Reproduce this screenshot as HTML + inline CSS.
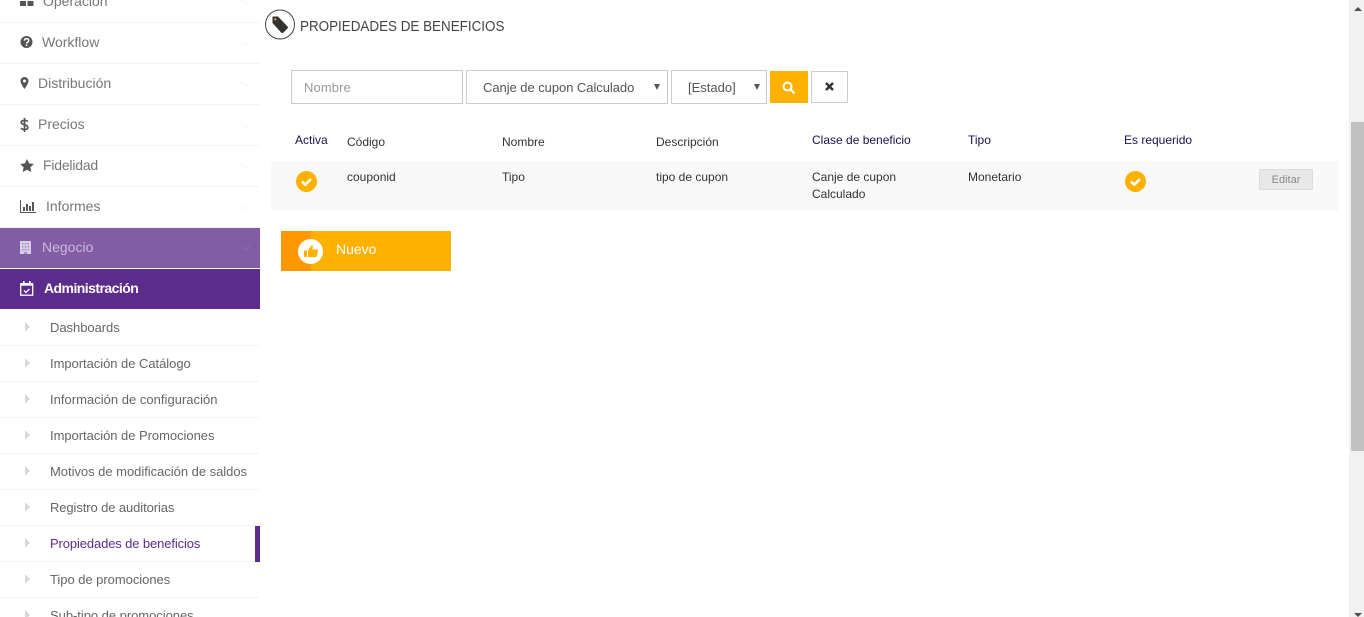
<!DOCTYPE html>
<html lang="es"><head><meta charset="utf-8"><title>Propiedades de beneficios</title>
<style>
html,body{margin:0;padding:0;background:#fff;width:1364px;height:617px;overflow:hidden}
body{font-family:"Liberation Sans",Arial,sans-serif;position:relative}
.a{position:absolute;white-space:nowrap}
.m{position:absolute;left:0;width:260px;height:40px;border-bottom:1px solid #f3f3f3;box-sizing:content-box}
.m span{position:absolute;top:10px;font-size:14px;line-height:18px;color:#777;letter-spacing:0}
.m svg.c{position:absolute;left:238px;top:17px}
.m svg.i{position:absolute}
.s{position:absolute;left:0;width:260px;height:35px;border-bottom:1px solid #f3f3f3}
.s span{position:absolute;left:50px;top:9px;font-size:13px;line-height:17px;color:#666;letter-spacing:-.04px;white-space:nowrap}
.s i{position:absolute;left:25px;top:12px;width:0;height:0;border-left:5px solid #d8d8d8;border-top:5px solid transparent;border-bottom:5px solid transparent}
.t{position:absolute;font-size:12px;line-height:17px;color:#333;white-space:nowrap}
.h{color:#1d0f4c}
</style></head><body>

<!-- sidebar top items -->
<div class="m" style="top:-18px"><svg class="i" style="left:20px;top:17px" width="14" height="10"><rect x="0" y="2" width="6" height="5" fill="#555"/><rect x="7.5" y="2" width="6" height="5" fill="#555"/></svg><span style="left:43px">Operación</span><svg class="c" width="14" height="8"><path d="M3 1l4.500 4.500L12 1" fill="none" stroke="#f4f4f4" stroke-width=".8"/></svg></div>
<div class="m" style="top:23px"><svg class="i" style="left:20px;top:12px" width="13" height="14" viewBox="0 0 13 14"><circle cx="6.500" cy="7" r="6" fill="#555"/><path d="M4.400 5.600c0-2.600 4.300-2.600 4.300 0 0 1.600-2.100 1.500-2.100 2.900" fill="none" stroke="#fff" stroke-width="1.500"/><rect x="5.800" y="9.400" width="1.600" height="1.600" fill="#fff"/></svg><span style="left:42px">Workflow</span><svg class="c" width="14" height="8"><path d="M3 1l4.500 4.500L12 1" fill="none" stroke="#f4f4f4" stroke-width=".8"/></svg></div>
<div class="m" style="top:64px"><svg class="i" style="left:20px;top:12px" width="9" height="14" viewBox="0 0 9 14"><path d="M4.500 1A4 4 0 0 0 .5 5c0 2.600 4 8 4 8s4-5.400 4-8a4 4 0 0 0-4-4z" fill="#555"/><circle cx="4.500" cy="5" r="1.500" fill="#fff"/></svg><span style="left:38px">Distribución</span><svg class="c" width="14" height="8"><path d="M3 1l4.500 4.500L12 1" fill="none" stroke="#f4f4f4" stroke-width=".8"/></svg></div>
<div class="m" style="top:105px"><svg class="i" style="left:20px;top:12px" width="9" height="16" viewBox="0 0 9 16"><path d="M7.800 4.600C7 3.300 1.200 2.700 1.200 5.200c0 3 6.600 2 6.600 5.400 0 2.600-5.800 2.200-6.800.6M4.500 1v14" fill="none" stroke="#555" stroke-width="1.700"/></svg><span style="left:38px">Precios</span><svg class="c" width="14" height="8"><path d="M3 1l4.500 4.500L12 1" fill="none" stroke="#f4f4f4" stroke-width=".8"/></svg></div>
<div class="m" style="top:146px"><svg class="i" style="left:20px;top:13px" width="14" height="13" viewBox="0 0 14 13"><path d="M7 0l2.100 4.400 4.800.6-3.500 3.300.9 4.700L7 10.700 2.700 13l.9-4.700L.1 5l4.800-.6z" fill="#555"/></svg><span style="left:43px;letter-spacing:-.2px">Fidelidad</span><svg class="c" width="14" height="8"><path d="M3 1l4.500 4.500L12 1" fill="none" stroke="#f4f4f4" stroke-width=".8"/></svg></div>
<div class="m" style="top:187px"><svg class="i" style="left:20px;top:13px" width="16" height="13" viewBox="0 0 16 13"><path d="M.5 0v12.500H16" fill="none" stroke="#555" stroke-width="1"/><path d="M3 7h2v4H3zM6 4h2v7H6zM9 6h2v5H9zM12 2h2v9h-2z" fill="#555"/></svg><span style="left:46px">Informes</span><svg class="c" width="14" height="8"><path d="M3 1l4.500 4.500L12 1" fill="none" stroke="#f4f4f4" stroke-width=".8"/></svg></div>

<!-- Negocio -->
<div class="a" style="left:0;top:228px;width:260px;height:40px;background:#825da6"></div>
<svg class="a" style="left:20px;top:241px" width="11" height="13"><rect width="11" height="13" fill="#d9cfe4"/><g fill="#a98cc4"><rect x="2" y="2" width="1.500" height="1.500"/><rect x="4.700" y="2" width="1.500" height="1.500"/><rect x="7.500" y="2" width="1.500" height="1.500"/><rect x="2" y="5" width="1.500" height="1.500"/><rect x="4.700" y="5" width="1.500" height="1.500"/><rect x="7.500" y="5" width="1.500" height="1.500"/><rect x="2" y="8" width="1.500" height="1.500"/><rect x="4.700" y="8" width="1.500" height="1.500"/><rect x="7.500" y="8" width="1.500" height="1.500"/><rect x="4" y="11" width="3" height="2"/></g></svg>
<div class="a" style="left:42px;top:238px;font-size:14px;line-height:18px;color:#c9b9da">Negocio</div>
<svg class="a" style="left:238px;top:245px" width="14" height="8"><path d="M3 1l4.500 4.500L12 1" fill="none" stroke="#8f6db0" stroke-width=".8"/></svg>

<!-- Administración -->
<div class="a" style="left:0;top:269px;width:260px;height:40px;background:#5b2c8c"></div>
<svg class="a" style="left:20px;top:281px" width="14" height="15" viewBox="0 0 14 15"><rect x=".7" y="2.700" width="12" height="11.500" fill="none" stroke="#fff" stroke-width="1.300"/><rect x=".7" y="2.700" width="12" height="2" fill="#fff"/><rect x="3" y="0" width="1.600" height="3" fill="#fff"/><rect x="9" y="0" width="1.600" height="3" fill="#fff"/><path d="M4 9.500l2 2 3.500-3.500" fill="none" stroke="#fff" stroke-width="1.300"/></svg>
<div class="a" style="left:44px;top:279px;font-size:14px;line-height:18px;font-weight:bold;color:#fff;letter-spacing:-.55px">Administración</div>

<!-- submenu -->
<div class="s" style="top:310px"><i></i><span>Dashboards</span></div>
<div class="s" style="top:346px"><i></i><span>Importación de Catálogo</span></div>
<div class="s" style="top:382px"><i></i><span style="letter-spacing:.02px">Información de configuración</span></div>
<div class="s" style="top:418px"><i></i><span>Importación de Promociones</span></div>
<div class="s" style="top:454px"><i></i><span style="letter-spacing:-.03px">Motivos de modificación de saldos</span></div>
<div class="s" style="top:490px"><i></i><span style="letter-spacing:-.1px">Registro de auditorias</span></div>
<div class="s" style="top:526px"><i></i><span style="color:#5b2c8c;letter-spacing:-.12px">Propiedades de beneficios</span><div style="position:absolute;left:255px;top:0;width:5px;height:36px;background:#5b2c8c"></div></div>
<div class="s" style="top:562px"><i></i><span>Tipo de promociones</span></div>
<div class="s" style="top:598px"><i></i><span>Sub-tipo de promociones</span></div>

<!-- title -->
<svg class="a" style="left:265px;top:9px" width="30" height="31" viewBox="0 0 30 31"><circle cx="15" cy="15.500" r="14.500" fill="#fff" stroke="#444" stroke-width="1"/><path d="M7.500 7.500h5.500l9.500 10c.6.600.6 1.300 0 1.900l-4.300 4.300c-.6.500-1.300.5-1.900 0L7.500 14z" fill="#333"/><circle cx="10.300" cy="10.300" r="1.100" fill="#f5a623"/></svg>
<div class="a" style="left:300px;top:18px;font-size:15px;line-height:18px;color:#444;transform:scaleX(.895);transform-origin:0 0">PROPIEDADES DE BENEFICIOS</div>

<!-- filters -->
<div class="a" style="left:291px;top:70px;width:172px;height:34px;box-sizing:border-box;border:1px solid #ccc"></div>
<div class="a" style="left:304px;top:79px;font-size:13px;line-height:17px;color:#999;letter-spacing:.1px">Nombre</div>
<div class="a" style="left:466px;top:70px;width:202px;height:34px;box-sizing:border-box;border:1px solid #ccc"></div>
<div class="a" style="left:483px;top:79px;font-size:13px;line-height:17px;color:#555;letter-spacing:-.05px">Canje de cupon Calculado</div>
<div class="a" style="left:654px;top:84px;width:0;height:0;border-top:6px solid #555;border-left:3px solid transparent;border-right:3px solid transparent"></div>
<div class="a" style="left:671px;top:70px;width:96px;height:34px;box-sizing:border-box;border:1px solid #ccc"></div>
<div class="a" style="left:688px;top:79px;font-size:13px;line-height:17px;color:#555">[Estado]</div>
<div class="a" style="left:754px;top:84px;width:0;height:0;border-top:6px solid #555;border-left:3px solid transparent;border-right:3px solid transparent"></div>
<div class="a" style="left:770px;top:71px;width:38px;height:32px;background:#ffb100"></div>
<svg class="a" style="left:782px;top:81px" width="14" height="14" viewBox="0 0 14 14"><circle cx="5.500" cy="5.500" r="4" fill="none" stroke="#fff" stroke-width="2"/><path d="M8.500 8.500l4 4" stroke="#fff" stroke-width="2.200"/></svg>
<div class="a" style="left:811px;top:71px;width:37px;height:32px;box-sizing:border-box;border:1px solid #ccc"></div>
<svg class="a" style="left:825px;top:82px" width="9" height="9" viewBox="0 0 9 9"><path d="M1 1l7 7M8 1L1 8" stroke="#333" stroke-width="2.400"/></svg>

<!-- table -->
<div class="t h" style="left:295px;top:132px">Activa</div>
<div class="t" style="left:347px;top:134px">Código</div>
<div class="t" style="left:502px;top:134px">Nombre</div>
<div class="t" style="left:656px;top:134px">Descripción</div>
<div class="t h" style="left:812px;top:132px">Clase de beneficio</div>
<div class="t h" style="left:968px;top:132px">Tipo</div>
<div class="t h" style="left:1124px;top:132px">Es requerido</div>

<div class="a" style="left:271px;top:161px;width:1067px;height:50px;background:#f9f9f9"></div>
<svg class="a" style="left:296px;top:171px" width="21" height="21" viewBox="0 0 21 21"><circle cx="10.500" cy="10.500" r="10.500" fill="#ffb100"/><path d="M6 10.500l3.200 3.200 5.800-5.600" fill="none" stroke="#fff" stroke-width="2.600"/></svg>
<div class="t" style="left:347px;top:169px">couponid</div>
<div class="t" style="left:502px;top:169px">Tipo</div>
<div class="t" style="left:656px;top:169px">tipo de cupon</div>
<div class="t" style="left:812px;top:169px">Canje de cupon</div>
<div class="t" style="left:812px;top:186px">Calculado</div>
<div class="t" style="left:968px;top:169px">Monetario</div>
<svg class="a" style="left:1125px;top:171px" width="21" height="21" viewBox="0 0 21 21"><circle cx="10.500" cy="10.500" r="10.500" fill="#ffb100"/><path d="M6 10.500l3.200 3.200 5.800-5.600" fill="none" stroke="#fff" stroke-width="2.600"/></svg>
<div class="a" style="left:1259px;top:169px;width:54px;height:21px;box-sizing:border-box;background:#e8e8e8;border:1px solid #ddd;font-size:11px;line-height:20px;text-align:center;color:#8a8a8a">Editar</div>

<!-- Nuevo -->
<div class="a" style="left:281px;top:231px;width:170px;height:40px;background:#ffb100"></div>
<div class="a" style="left:281px;top:231px;width:30px;height:40px;background:#ff9800"></div>
<div class="a" style="left:298px;top:239px;width:25px;height:25px;border-radius:50%;background:#fff"></div>
<svg class="a" style="left:304px;top:245px" width="14" height="13" viewBox="0 0 14 13"><rect x="0" y="5.500" width="3" height="6.500" fill="#ffb100"/><path d="M4 5.500L7 1c.5-1 2-.7 2 .6L8.500 4.500H13c.8 0 1.200.7 1 1.400l-1.300 5.500c-.2.500-.5.700-1 .7H4z" fill="#ffb100"/></svg>
<div class="a" style="left:336px;top:240px;font-size:14px;line-height:18px;color:#fff">Nuevo</div>

<!-- scrollbar -->
<div class="a" style="left:1349px;top:0;width:15px;height:617px;background:#f1f1f1"></div>
<div class="a" style="left:1351px;top:122px;width:13px;height:329px;background:#c1c1c1"></div>
<div class="a" style="left:1354px;top:7px;width:0;height:0;border-bottom:4px solid #505050;border-left:4px solid transparent;border-right:4px solid transparent"></div>
<div class="a" style="left:1354px;top:613px;width:0;height:0;border-top:4px solid #505050;border-left:4px solid transparent;border-right:4px solid transparent"></div>

</body></html>
